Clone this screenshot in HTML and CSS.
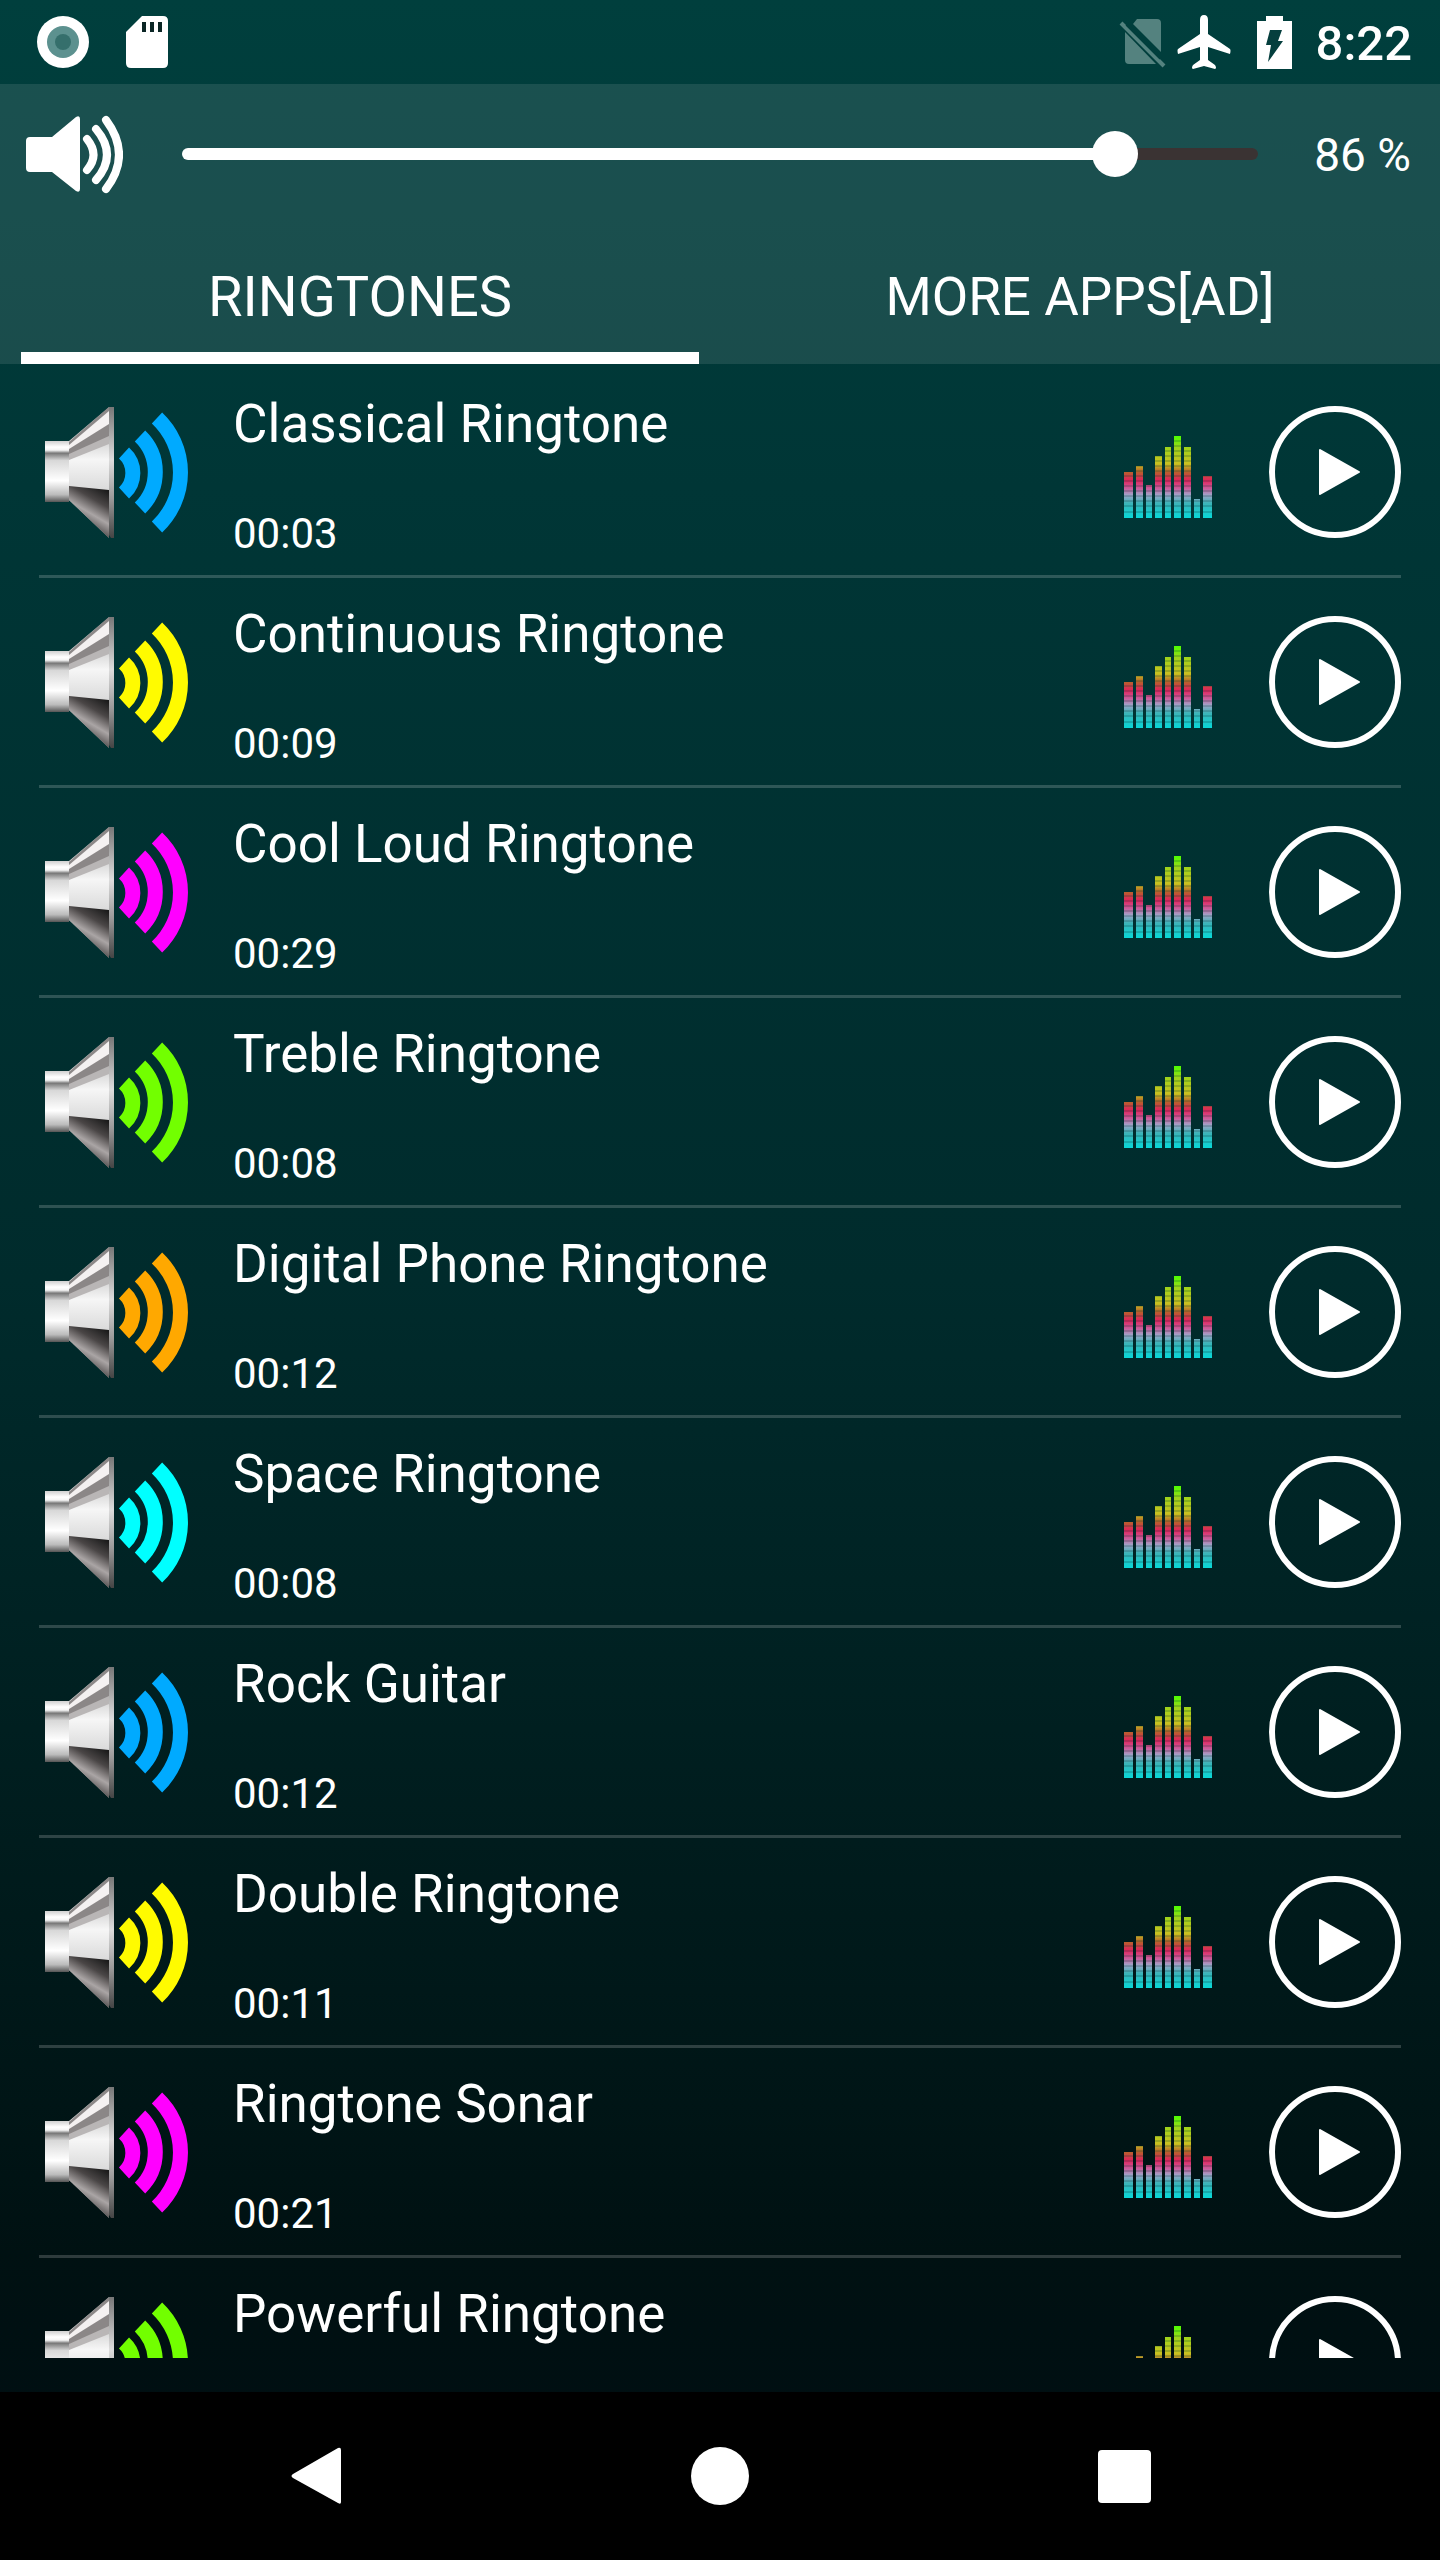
FILE: index.html
```html
<!DOCTYPE html>
<html lang="en">
<head>
    <meta charset="UTF-8" />
    <meta name="viewport" content="width=device-width, initial-scale=1.0" />
    <title>Ringtones</title>
    <link rel="stylesheet" href="styles.css">
</head>
<body>

<!-- Shared icons -->
<svg class="sprite" aria-hidden="true">
    <defs>
        <linearGradient id="bodyFill" x1="0" y1="0" x2="0" y2="1">
            <stop offset="0" stop-color="#8a8a8a" />
            <stop offset="0.12" stop-color="#b4b4b4" />
            <stop offset="0.4" stop-color="#f6f6f6" />
            <stop offset="0.62" stop-color="#dcdcdc" />
            <stop offset="1" stop-color="#8c8c8c" />
        </linearGradient>
        <linearGradient id="lowerFill" gradientUnits="userSpaceOnUse" x1="50" y1="78" x2="30" y2="112">
            <stop offset="0" stop-color="#1c1c1c" />
            <stop offset="0.35" stop-color="#4a4646" />
            <stop offset="0.7" stop-color="#aaa5a5" />
            <stop offset="1" stop-color="#5c5858" />
        </linearGradient>
        <linearGradient id="magnetFill" x1="0" y1="0" x2="0" y2="1">
            <stop offset="0" stop-color="#d0d0d0" />
            <stop offset="0.1" stop-color="#fff" />
            <stop offset="0.15" stop-color="#f4f4f4" />
            <stop offset="0.2" stop-color="#777" />
            <stop offset="0.32" stop-color="#d8d8d8" />
            <stop offset="0.65" stop-color="#fff" />
            <stop offset="0.88" stop-color="#bbb" />
            <stop offset="1" stop-color="#555" />
        </linearGradient>
        <linearGradient id="rimFill" x1="0" y1="0" x2="0" y2="1">
            <stop offset="0" stop-color="#777" />
            <stop offset="0.4" stop-color="#ddd" />
            <stop offset="0.7" stop-color="#999" />
            <stop offset="1" stop-color="#444" />
        </linearGradient>
        <linearGradient id="eqFill" gradientUnits="userSpaceOnUse" x1="0" y1="0" x2="0" y2="82">
            <stop offset="0" stop-color="#4dff00" />
            <stop offset="0.14" stop-color="#9fd41a" />
            <stop offset="0.34" stop-color="#c9c020" />
            <stop offset="0.44" stop-color="#b8602c" />
            <stop offset="0.54" stop-color="#e0245c" />
            <stop offset="0.64" stop-color="#cc5c9c" />
            <stop offset="0.72" stop-color="#a0a4c8" />
            <stop offset="0.82" stop-color="#3cb4b8" />
            <stop offset="1" stop-color="#08d8d8" />
        </linearGradient>
        <clipPath id="eqBars">
            <path d="M0 36h9v46H0zM12 30h7v52h-7zM22 49h6v33h-6zM31 20h7v62h-7zM41 11h6v71h-6zM50 0h7v82h-7zM60 11h7v71h-7zM70 63h6v19h-6zM79 40h9v42h-9z" />
        </clipPath>
    </defs>
    <symbol id="speaker" viewBox="0 0 146 132">
        <path d="M0 35h24v61H0z" fill="url(#magnetFill)" />
        <path d="M24 35L64 1v131L24 94z" fill="url(#bodyFill)" />
        <path d="M24 37L64 3v21L24 46z" fill="#f4f1f1" />
        <path d="M24 36L64 1v4L24 39z" fill="#8c8888" />
        <path d="M24 43L64 18v14L24 50z" fill="#8b8787" />
        <path d="M24 48L64 30v8L24 54z" fill="#b9b6b6" />
        <path d="M24 80L64 84v48L24 94z" fill="url(#lowerFill)" />
        <path d="M64 1h5v131h-3l-2-3z" fill="url(#rimFill)" />
        <g fill="none" stroke="currentColor" stroke-width="15">
            <path d="M79 47A27 27 0 0 1 79 87" />
            <path d="M95 30A50 50 0 0 1 95 102" />
            <path d="M112 12A75 75 0 0 1 112 121" />
        </g>
    </symbol>
    <symbol id="equalizer" viewBox="0 0 88 82">
        <g clip-path="url(#eqBars)">
            <path fill="url(#eqFill)" d="M0 0h88v82H0z" />
            <path stroke="#003334" stroke-opacity="0.4" stroke-width="1" d="M0 5h88M0 10h88M0 15h88M0 20h88M0 25h88M0 30h88M0 35h88M0 40h88M0 45h88M0 50h88M0 55h88M0 60h88M0 65h88M0 70h88M0 76h88" />
        </g>
    </symbol>
    <symbol id="play" viewBox="0 0 132 132">
        <circle cx="66" cy="66" r="63" fill="none" stroke="#fff" stroke-width="6" />
        <path d="M51 44l39 22-39 22z" fill="#fff" stroke="#fff" stroke-width="2" stroke-linejoin="round" />
    </symbol>
</svg>

<div class="status-bar">
    <svg class="status-icon" viewBox="0 0 54 54" aria-hidden="true">
        <circle cx="27" cy="27" r="26" fill="#fff" />
        <circle cx="27" cy="27" r="16" fill="#5c918f" />
        <circle cx="27" cy="27" r="8" fill="#356f6c" />
    </svg>
    <svg class="status-icon sd-icon" viewBox="0 0 54 54" aria-hidden="true">
        <path d="M22 1h21q5 0 5 5v42q0 5-5 5H11q-5 0-5-5V17z" fill="#fff" />
        <path d="M22 7h4v10h-4zM30 7h4v10h-4zM38 7h4v10h-4z" fill="#0b2625" />
    </svg>
    <div class="status-right">
        <svg class="status-icon" viewBox="0 0 54 54" aria-hidden="true">
            <path d="M18 4h20q4 0 4 4v29L14 9zM6 17l31 32H10q-4 0-4-4z" fill="#54827f" />
            <path d="M2 8l43 43" stroke="#54827f" stroke-width="4" />
            <path d="M8 9l34 34" stroke="#003e3c" stroke-width="4" />
        </svg>
        <svg class="status-icon" viewBox="0 0 54 54" aria-hidden="true">
            <path d="M27 0q4 0 4 5v14l22 15q1 1 0 5l-22-7v13l7 5q2 3 0 4l-11-3-11 3q-2-1 0-4l7-5V32L1 39q-1-4 0-5l22-15V5q0-5 4-5z" fill="#fff" />
        </svg>
        <svg class="battery-icon" viewBox="0 0 35 54" aria-hidden="true">
            <path d="M9 1h17v5h9v48H0V6h9z" fill="#fff" />
            <path d="M13 15h12l-4 11h5L11 47l3-17H9z" fill="#053f3e" />
        </svg>
        <span class="clock">8:22</span>
    </div>
</div>

<header>
    <div class="volume">
        <svg class="volume-icon" viewBox="0 0 98 80" aria-hidden="true">
            <path d="M5 23h22L51 3q4-2 4 2v70q0 4-4 2L27 58H5q-4 0-4-4V27q0-4 4-4z" fill="#fff" />
            <g fill="none" stroke="#fff" stroke-width="8" stroke-linecap="round">
                <path d="M62 25q13 16 0 31" />
                <path d="M71 15q22 26 0 51" />
                <path d="M81 6q26 35 0 69" />
            </g>
        </svg>
        <input type="range" class="volume-slider" id="volume" min="0" max="15" value="13" aria-label="Volume" />
        <output class="volume-value" for="volume">86 %</output>
    </div>
    <nav class="tabs">
        <a href="#ringtones" class="tab active">RINGTONES</a>
        <a href="#apps" class="tab">MORE APPS[AD]</a>
    </nav>
</header>

<main id="ringtones">
    <ul class="ringtones">
        <li class="ringtone blue">
            <svg class="speaker"><use href="#speaker" /></svg>
            <div class="info"><h2>Classical Ringtone</h2><p>00:03</p></div>
            <svg class="equalizer"><use href="#equalizer" /></svg>
            <button class="play-btn" aria-label="Play Classical Ringtone"><svg><use href="#play" /></svg></button>
        </li>
        <li class="ringtone yellow">
            <svg class="speaker"><use href="#speaker" /></svg>
            <div class="info"><h2>Continuous Ringtone</h2><p>00:09</p></div>
            <svg class="equalizer"><use href="#equalizer" /></svg>
            <button class="play-btn" aria-label="Play Continuous Ringtone"><svg><use href="#play" /></svg></button>
        </li>
        <li class="ringtone magenta">
            <svg class="speaker"><use href="#speaker" /></svg>
            <div class="info"><h2>Cool Loud Ringtone</h2><p>00:29</p></div>
            <svg class="equalizer"><use href="#equalizer" /></svg>
            <button class="play-btn" aria-label="Play Cool Loud Ringtone"><svg><use href="#play" /></svg></button>
        </li>
        <li class="ringtone green">
            <svg class="speaker"><use href="#speaker" /></svg>
            <div class="info"><h2>Treble Ringtone</h2><p>00:08</p></div>
            <svg class="equalizer"><use href="#equalizer" /></svg>
            <button class="play-btn" aria-label="Play Treble Ringtone"><svg><use href="#play" /></svg></button>
        </li>
        <li class="ringtone orange">
            <svg class="speaker"><use href="#speaker" /></svg>
            <div class="info"><h2>Digital Phone Ringtone</h2><p>00:12</p></div>
            <svg class="equalizer"><use href="#equalizer" /></svg>
            <button class="play-btn" aria-label="Play Digital Phone Ringtone"><svg><use href="#play" /></svg></button>
        </li>
        <li class="ringtone cyan">
            <svg class="speaker"><use href="#speaker" /></svg>
            <div class="info"><h2>Space Ringtone</h2><p>00:08</p></div>
            <svg class="equalizer"><use href="#equalizer" /></svg>
            <button class="play-btn" aria-label="Play Space Ringtone"><svg><use href="#play" /></svg></button>
        </li>
        <li class="ringtone blue">
            <svg class="speaker"><use href="#speaker" /></svg>
            <div class="info"><h2>Rock Guitar</h2><p>00:12</p></div>
            <svg class="equalizer"><use href="#equalizer" /></svg>
            <button class="play-btn" aria-label="Play Rock Guitar"><svg><use href="#play" /></svg></button>
        </li>
        <li class="ringtone yellow">
            <svg class="speaker"><use href="#speaker" /></svg>
            <div class="info"><h2>Double Ringtone</h2><p>00:11</p></div>
            <svg class="equalizer"><use href="#equalizer" /></svg>
            <button class="play-btn" aria-label="Play Double Ringtone"><svg><use href="#play" /></svg></button>
        </li>
        <li class="ringtone magenta">
            <svg class="speaker"><use href="#speaker" /></svg>
            <div class="info"><h2>Ringtone Sonar</h2><p>00:21</p></div>
            <svg class="equalizer"><use href="#equalizer" /></svg>
            <button class="play-btn" aria-label="Play Ringtone Sonar"><svg><use href="#play" /></svg></button>
        </li>
        <li class="ringtone green">
            <svg class="speaker"><use href="#speaker" /></svg>
            <div class="info"><h2>Powerful Ringtone</h2></div>
            <svg class="equalizer"><use href="#equalizer" /></svg>
            <button class="play-btn" aria-label="Play Powerful Ringtone"><svg><use href="#play" /></svg></button>
        </li>
    </ul>
</main>

<footer>
    <div class="nav-buttons">
        <button aria-label="Back"><svg viewBox="0 0 60 60"><path d="M54 4v52q0 3-3 1L6 32q-3-2 0-4L51 2q3-1 3 2z" fill="#fff" /></svg></button>
        <button aria-label="Home"><svg viewBox="0 0 60 60"><circle cx="30" cy="30" r="29" fill="#fff" /></svg></button>
        <button aria-label="Recent apps"><svg viewBox="0 0 60 60"><rect x="5" y="4" width="53" height="53" rx="4" fill="#fff" /></svg></button>
    </div>
</footer>

</body>
</html>
```
FILE: styles.css
```css
* {
    box-sizing: border-box;
    margin: 0;
    padding: 0;
}

body {
    display: flex;
    flex-direction: column;
    height: 100vh;
    font-family: Roboto, sans-serif;
    color: #fff;
    background: linear-gradient(to bottom, #003f3d 0%, #003636 19%, #002b2c 50%, #001112 88%, #000f12 94%);
}

svg {
    display: block;
}

button {
    border: none;
    background: none;
    cursor: pointer;
}

.sprite {
    position: absolute;
    width: 0;
    height: 0;
}

/* Status bar */
.status-bar {
    display: flex;
    flex: none;
    align-items: center;
    height: 84px;
    padding: 0 28px 0 36px;
}

.status-icon {
    width: 54px;
    height: 54px;
}

.sd-icon {
    margin-left: 30px;
}

.status-right {
    display: flex;
    align-items: center;
    margin-left: auto;
}

.status-right .status-icon {
    margin-right: 4px;
}

.battery-icon {
    width: 35px;
    height: 54px;
    margin: 0 24px 0 22px;
}

.clock {
    padding-top: 4px;
    font-size: 49px;
    font-weight: 500;
    line-height: 60px;
}

/* Volume and tabs */
header {
    flex: none;
    background: rgba(255, 255, 255, 0.1);
}

.volume {
    display: flex;
    align-items: center;
    height: 140px;
    padding: 0 29px 0 25px;
}

.volume-icon {
    width: 98px;
    height: 80px;
}

.volume-slider {
    flex: 1;
    min-width: 0;
    height: 12px;
    margin: 0 56px 0 59px;
    border-radius: 6px;
    background: linear-gradient(to right, #fff 87%, #3a3333 87%);
    appearance: none;
    -webkit-appearance: none;
}

/* the track sticks out by half a thumb on each side */
.volume-slider::-webkit-slider-runnable-track {
    height: 46px;
    margin: 0 -23px;
}

.volume-slider::-webkit-slider-thumb {
    -webkit-appearance: none;
    width: 46px;
    height: 46px;
    border-radius: 50%;
    background: #fff;
}

.volume-value {
    padding-top: 2px;
    font-size: 46px;
    line-height: 60px;
}

.tabs {
    display: flex;
    padding: 0 21px;
    gap: 42px;
}

.tab {
    flex: 1;
    height: 140px;
    padding-top: 14px;
    border-bottom: 12px solid transparent;
    font-size: 53px;
    line-height: 118px;
    text-align: center;
    color: #fff;
    text-decoration: none;
}

.tab.active {
    font-size: 56px;
    border-color: #fff;
}

/* List */
main {
    flex: 1;
    min-height: 0;
    margin-bottom: 34px;
    padding-top: 4px;
    overflow: hidden;
}

.ringtones {
    list-style: none;
    padding: 0 39px;
}

.ringtone {
    display: flex;
    align-items: center;
    height: 210px;
    padding-left: 6px;
    border-bottom: 3px solid rgba(255, 255, 255, 0.18);
}

.blue { color: #00aaff; }
.yellow { color: #fffb00; }
.magenta { color: #ff00ff; }
.green { color: #72ff00; }
.orange { color: #ffa800; }
.cyan { color: #00ffff; }

.speaker {
    width: 146px;
    height: 132px;
}

.info {
    display: flex;
    flex: 1;
    flex-direction: column;
    justify-content: space-between;
    align-self: stretch;
    min-width: 0;
    padding: 26px 0 16px 42px;
    color: #fff;
}

.info h2 {
    font-size: 53px;
    font-weight: 400;
    line-height: 60px;
}

.info p {
    font-size: 42px;
    line-height: 50px;
}

.equalizer {
    width: 88px;
    height: 82px;
    margin: 10px 57px 0 0;
}

.play-btn svg {
    width: 132px;
    height: 132px;
}

/* Navigation bar */
footer {
    flex: none;
    height: 168px;
    background: #000;
}

.nav-buttons {
    display: grid;
    grid-template-columns: repeat(3, 1fr);
    align-items: center;
    width: 84%;
    height: 100%;
    margin: 0 auto;
}

.nav-buttons svg {
    width: 60px;
    height: 60px;
    margin: 0 auto;
}
```
